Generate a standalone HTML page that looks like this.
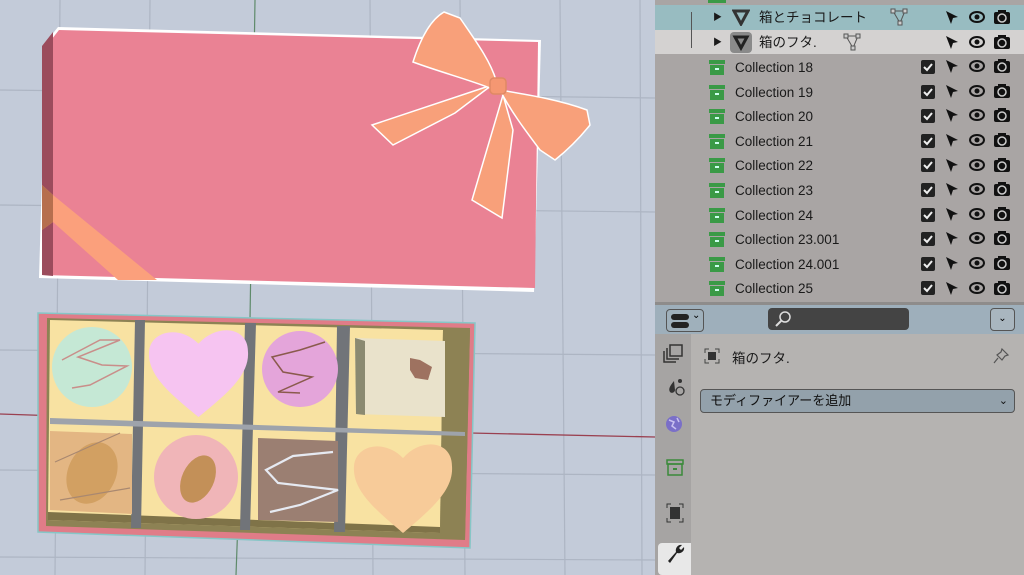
<!DOCTYPE html>
<html><head><meta charset="utf-8"><style>
*{margin:0;padding:0;box-sizing:border-box}
body{width:1024px;height:575px;overflow:hidden;background:#c3cbd9;font-family:"Liberation Sans","Noto Sans CJK JP",sans-serif;position:relative}
#vp{position:absolute;left:0;top:0;width:655px;height:575px}
#ol{position:absolute;left:655px;top:0;width:369px;height:302px;background:#a9a5a4;overflow:hidden}
.row{position:absolute;left:0;width:369px;height:25px;font-size:13.5px;color:#1a1a1a;line-height:25px}
.row .t{position:absolute;left:80px}
.ic{position:absolute;top:0}
#sep{position:absolute;left:655px;top:302px;width:369px;height:3px;background:#8e8c8b}
#pr{position:absolute;left:655px;top:305px;width:369px;height:270px;background:#b5b3b1}
#hdr{position:absolute;left:0;top:0;width:369px;height:29px;background:#9eafbb}
#tabs{position:absolute;left:0;top:29px;width:36px;height:241px;background:#a6a4a3}
</style></head><body>
<svg id="vp" width="655" height="575" viewBox="0 0 655 575">
<rect width="655" height="575" fill="#c3cbd9"/>
<g stroke="#adb5c3" stroke-width="1.2" fill="none">
<path d="M0 90L655 98M0 205L655 212M0 350L655 355M0 470L655 475M0 557L655 560"/>
<path d="M150 0L145 575M370 0L373 575M460 0L465 575M560 0L565 575M640 0L642 575M60 0L55 575"/>
</g>
<path d="M255 0L250 320" stroke="#5e8a6a" stroke-width="1.2"/>
<path d="M0 414L60 416M470 433L655 437" stroke="#9a4050" stroke-width="1.3"/>
<path d="M238 520L236 575" stroke="#5e8a6a" stroke-width="1.2"/>
<!-- lid -->
<path d="M46 42L58 27L541 40L534 292L39 278Z" fill="#fff"/>
<path d="M48 44L59 30L538 42L535 288L42 275Z" fill="#ea8294"/>
<path d="M42 46L53 32L53 276L42 275Z" fill="#9b4c5c"/>
<path d="M42 185L53 195L157 280L118 280L53 222L42 230Z" fill="#fba07c"/>
<path d="M42 185L53 195L53 222L42 230Z" fill="#b66f4e"/>
<!-- bow -->
<g fill="#f8a07a" stroke="#fff" stroke-width="1.5">
<path d="M492 85L372 125L393 145L455 113Z"/>
<path d="M503 95L472 200L502 218L513 130Z"/>
<path d="M413 62C420 40 430 20 444 12L460 18C475 40 490 60 496 80L490 88C470 80 440 72 413 62Z"/>
<path d="M500 90C530 95 560 100 587 110L590 125C578 140 565 152 555 160L540 150C525 130 510 110 500 90Z"/>
<rect x="490" y="78" width="16" height="16" rx="4" fill="#f59772" stroke="#e08964"/>
</g>
<!-- tray -->
<path d="M38 313L475 323L470 548L38 532Z" fill="#e07c88"/>
<path d="M38 313L475 323L470 548L38 532Z" fill="none" stroke="#86c6c6" stroke-width="1.5"/>
<path d="M47 318L470 328L465 540L46 526Z" fill="#8d8254"/>
<path d="M50 320L443 330L440 533L48 520Z" fill="#f8e2a2"/>
<path d="M443 330L470 330L465 540L440 533Z" fill="#8d8254"/>
<path d="M48 512L440 527L440 533L48 520Z" fill="#7f7348"/>
<g fill="#717479">
<path d="M135 320L145 320L141 528L131 528Z"/>
<path d="M245 323L256 323L250 530L240 530Z"/>
<path d="M337 326L350 326L345 532L334 532Z"/>
</g>
<path d="M50 418L465 432L465 436L50 424Z" fill="#9ea3ab"/>
<circle cx="92" cy="367" r="40" fill="#c5e8d5"/>
<path d="M62 360L100 340L120 340L78 357L102 365L127 366L90 385L72 388" stroke="#c98e8a" stroke-width="1.5" fill="none"/>
<path transform="translate(147,323) scale(1.03,0.94)" d="M50 100C22 75 0 55 2 30C4 8 32 2 50 22C68 0 98 4 98 30C100 55 78 75 50 100Z" fill="#f6c4f1"/>
<circle cx="300" cy="369" r="38" fill="#e4a5da"/>
<path d="M325 342L300 350L272 357L283 372L312 377L278 392L300 393" stroke="#8a5a4c" stroke-width="1.5" fill="none"/>
<path d="M355 338L445 341L445 417L356 414Z" fill="#e9e2cb"/>
<path d="M355 338L365 341L365 415L356 414Z" fill="#8b8a71"/>
<path d="M410 358L420 360L432 367L428 380L415 378L410 370Z" fill="#9e7260"/>
<path d="M50 431L132 434L132 514L50 510Z" fill="#e3b683"/>
<ellipse cx="92" cy="473" rx="24" ry="32" transform="rotate(25 92 473)" fill="#d2a062"/>
<path d="M55 462L120 433M60 500L130 488" stroke="#a98870" stroke-width="1.2" fill="none"/>
<circle cx="196" cy="477" r="42" fill="#f0b5b8"/>
<ellipse cx="198" cy="479" rx="16" ry="25" transform="rotate(25 198 479)" fill="#c39058"/>
<path d="M258 438L338 441L338 522L258 520Z" fill="#9b7f72"/>
<path d="M333 452L293 456L266 470L278 483L338 490L300 505L270 512" stroke="#e6eaf2" stroke-width="2.2" fill="none"/>
<path transform="translate(352,437) scale(1.02,0.96)" d="M50 100C22 75 0 55 2 30C4 8 32 2 50 22C68 0 98 4 98 30C100 55 78 75 50 100Z" fill="#f7cb99"/>
</svg>

<div id="ol">
<div style="position:absolute;left:53px;top:-3px;width:18px;height:6px;background:#3a9a46"></div>
<div style="position:absolute;left:0;top:5px;width:369px;height:25px;background:#98bcc1"></div>
<div style="position:absolute;left:0;top:30px;width:369px;height:24px;background:#d4d2d1"></div>
<div style="position:absolute;left:36px;top:12px;width:1px;height:36px;background:#555"></div>
<div class="row" style="top:5px"><span style="position:absolute;left:58px;font-size:9px">▶</span>
<svg class="ic" style="left:77px;top:4px" width="18" height="17"><path d="M2 2H16L9 15Z" fill="none" stroke="#333" stroke-width="3"/></svg>
<span style="position:absolute;left:104px">箱とチョコレート</span>
<svg class="ic" style="left:235px;top:3px" width="18" height="18"><path d="M3 3H15L10 15Z" fill="none" stroke="#555" stroke-width="1"/><rect x="1" y="1" width="4" height="4" fill="#ccc" stroke="#555"/><rect x="13" y="1" width="4" height="4" fill="#ccc" stroke="#555"/><rect x="8" y="13" width="4" height="4" fill="#ccc" stroke="#555"/></svg>
</div>
<div class="row" style="top:30px"><span style="position:absolute;left:58px;font-size:9px">▶</span>
<div style="position:absolute;left:75px;top:2px;width:22px;height:21px;border-radius:4px;background:#8a8a8a"></div>
<svg class="ic" style="left:77px;top:4px" width="18" height="17"><path d="M3 3H15L9 14Z" fill="none" stroke="#222" stroke-width="3"/></svg>
<span style="position:absolute;left:104px">箱のフタ.</span>
<svg class="ic" style="left:188px;top:3px" width="18" height="18"><path d="M3 3H15L10 15Z" fill="none" stroke="#555" stroke-width="1"/><rect x="1" y="1" width="4" height="4" fill="#ccc" stroke="#555"/><rect x="13" y="1" width="4" height="4" fill="#ccc" stroke="#555"/><rect x="8" y="13" width="4" height="4" fill="#ccc" stroke="#555"/></svg>
</div>
<div id="rows"></div>
</div>
<div id="sep"></div>
<div id="pr">
<div id="hdr">
<div style="position:absolute;left:11px;top:4px;width:38px;height:23px;border:1px solid #555;border-radius:4px;background:#9fb0bb"></div>
<div style="position:absolute;left:16px;top:9px;width:18px;height:6px;border-radius:3px;background:#222"></div>
<div style="position:absolute;left:16px;top:17px;width:18px;height:6px;border-radius:3px;background:#222"></div>
<span style="position:absolute;left:37px;top:5px;font-size:10px">⌄</span>
<div style="position:absolute;left:113px;top:3px;width:141px;height:22px;border-radius:4px;background:#444"></div>
<svg style="position:absolute;left:118px;top:5px" width="20" height="18"><circle cx="12" cy="7" r="5" fill="none" stroke="#ddd" stroke-width="1.5"/><path d="M8 11L3 16" stroke="#ddd" stroke-width="2"/></svg>
<div style="position:absolute;left:335px;top:3px;width:25px;height:23px;border:1px solid #555;border-radius:4px;background:#a9b6bf;font-size:10px;text-align:center;line-height:20px">⌄</div>
</div>
<div id="tabs"></div>
<div style="position:absolute;left:3px;top:238px;width:33px;height:32px;background:#e8e8e8;border-radius:4px 0 0 4px"></div>
<svg style="position:absolute;left:0;top:29px" width="36" height="241">
<g fill="none" stroke="#333" stroke-width="1.5"><rect x="15" y="11" width="12" height="11"/><path d="M12 14V25H24M9 17V28H21"/></g>
<path d="M19 47C15 52 13 55 15 58C17 60 20 58 20 56Z" fill="#333"/><circle cx="25" cy="57" r="4" fill="none" stroke="#333" stroke-width="1.3"/><circle cx="25" cy="47" r="2" fill="#333"/>
<circle cx="19" cy="90" r="8" fill="#7a6fc8"/><path d="M14 86L19 88L17 92L21 95M22 84L24 88" stroke="#c8c0f0" stroke-width="1.5" fill="none"/>
<rect x="12" y="126" width="16" height="4" fill="none" stroke="#3a8a3a" stroke-width="1.5"/><rect x="13" y="130" width="14" height="11" fill="none" stroke="#3a8a3a" stroke-width="1.5"/><rect x="18" y="134" width="4" height="2" fill="#3a8a3a"/>
<path d="M12 174V170H16M24 170H28V174M28 184V188H24M16 188H12V184" stroke="#333" fill="none"/><rect x="15" y="173" width="10" height="12" fill="#333"/>
<path d="M13 227L21 218C20 214 23 210 27 211L24 214L26 216L29 213C30 217 26 220 22 219L15 229Z" fill="#222"/>
</svg>
<svg style="position:absolute;left:48px;top:42px" width="18" height="18"><path d="M2 6V2H6M12 2H16V6M16 12V16H12M6 16H2V12" stroke="#444" fill="none"/><rect x="5" y="5" width="8" height="8" fill="#333"/></svg>
<span style="position:absolute;left:77px;top:42px;font-size:13.5px;color:#1a1a1a">箱のフタ.</span>
<svg style="position:absolute;left:337px;top:42px" width="18" height="18"><path d="M10 2L16 8L13 9L10 13L9 12L5 8L9 5Z M6 11L2 16" stroke="#555" fill="none" stroke-width="1.2"/></svg>
<div style="position:absolute;left:45px;top:84px;width:315px;height:24px;border:1px solid #555;border-radius:4px;background:#93a1ab;font-size:13px;line-height:22px;padding-left:9px;color:#111">モディファイアーを追加<span style="position:absolute;right:6px;font-size:11px">⌄</span></div>
</div>
<script>
var names=["Collection 18","Collection 19","Collection 20","Collection 21","Collection 22","Collection 23","Collection 24","Collection 23.001","Collection 24.001","Collection 25"];
var h='';
names.forEach(function(n,i){var y=55+i*24.6;
h+='<div class="row" style="top:'+y+'px">'+
'<svg class="ic" style="left:53px;top:4px" width="18" height="17"><rect x="1" y="1" width="16" height="4" fill="#3a9a46"/><rect x="2" y="6" width="14" height="10" fill="#3a9a46"/><rect x="7" y="9" width="4" height="2" fill="#cfe"/></svg>'+
'<span class="t">'+n+'</span>'+
'<svg class="ic" style="left:266px;top:5px" width="15" height="15"><rect x="0" y="0" width="14" height="14" rx="2" fill="#222"/><path d="M3 7L6 10L11 4" stroke="#eee" stroke-width="2" fill="none"/></svg>'+
'</div>';});
document.getElementById('rows').innerHTML=h;
var all='';
for(var i=0;i<12;i++){var y=5+i*24.6;if(i==1)y=30;
all+='<svg style="position:absolute;left:289px;top:'+(y+4)+'px" width="80" height="17"><path d="M2 2L14 8L9 9L7 15Z" fill="#111"/><ellipse cx="33" cy="8" rx="7" ry="5" fill="none" stroke="#111" stroke-width="2"/><circle cx="33" cy="8" r="2.5" fill="#111"/><rect x="50" y="3" width="16" height="12" rx="2" fill="#111"/><rect x="54" y="1" width="8" height="3" fill="#111"/><circle cx="58" cy="9" r="4" fill="none" stroke="#ccc" stroke-width="1.5"/></svg>';}
document.getElementById('ol').insertAdjacentHTML('beforeend',all);
</script>
</body></html>
